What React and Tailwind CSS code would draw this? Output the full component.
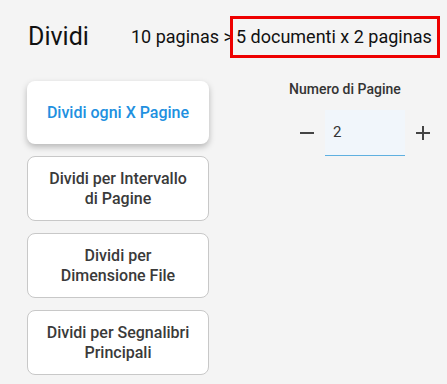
import { useState } from 'react';

const modes = [
  'Dividi ogni X Pagine',
  'Dividi per Intervallo di Pagine',
  'Dividi per Dimensione File',
  'Dividi per Segnalibri Principali',
];

export default function App() {
  const [active, setActive] = useState(0);
  const [pages, setPages] = useState(2);

  return (
    <div className="min-h-[384px] w-[447px] bg-[#f4f4f4] text-[#222] font-['Roboto',sans-serif]">
      {/* Header */}
      <div className="flex items-center pl-[28px] pt-[16px] h-[57px]">
        <h1 className="text-[25px] leading-none text-[#111] w-[103px]">Dividi</h1>
        <div className="flex items-center text-[18px] text-[#111]">
          <span>10 paginas &gt;</span>
          <span className="border-[3px] border-[#ee0000] h-[42px] flex items-center pl-[3px] pr-[5px] -ml-[3px]">
            5 documenti x 2 paginas
          </span>
        </div>
      </div>

      <div className="flex pt-[24px]">
        {/* Mode buttons */}
        <div className="flex flex-col gap-[12px] pl-[27px] w-[209px] shrink-0">
          {modes.map((label, i) => (
            <button
              key={label}
              onClick={() => setActive(i)}
              className={
                i === active
                  ? 'h-[63px] w-[182px] rounded-[8px] bg-white text-[#2190e0] text-[16px] font-medium leading-[20px] px-[16px] shadow-[0_3px_6px_rgba(0,0,0,0.25)]'
                  : 'h-[65px] w-[182px] rounded-[8px] bg-white border border-[#c8c8c8] text-[#3a3a3a] text-[16px] font-medium leading-[20px] px-[17px]'
              }
            >
              {label}
            </button>
          ))}
        </div>

        {/* Page count */}
        <div className="flex flex-col flex-1">
          <p className="text-[14px] text-[#333] font-medium -mt-[2px] ml-[80px]">Numero di Pagine</p>
          <div className="flex items-center mt-[10px] ml-[91px]">
            <button onClick={() => setPages(Math.max(1, pages - 1))} className="w-[25px] flex justify-start">
              <svg width="15" height="16" viewBox="0 0 15 16">
                <path d="M0 8h14" stroke="#444" strokeWidth="2" />
              </svg>
            </button>
            <div className="w-[80px] h-[46px] bg-[#f1f6fb] border-b border-[#5fb0e0] flex items-center pl-[8px] text-[15px] text-[#333]">
              {pages}
            </div>
            <button onClick={() => setPages(pages + 1)} className="w-[26px] flex justify-end">
              <svg width="16" height="16" viewBox="0 0 16 16">
                <path d="M1 8h14M8 1v14" stroke="#444" strokeWidth="2" />
              </svg>
            </button>
          </div>
        </div>
      </div>
    </div>
  );
}
